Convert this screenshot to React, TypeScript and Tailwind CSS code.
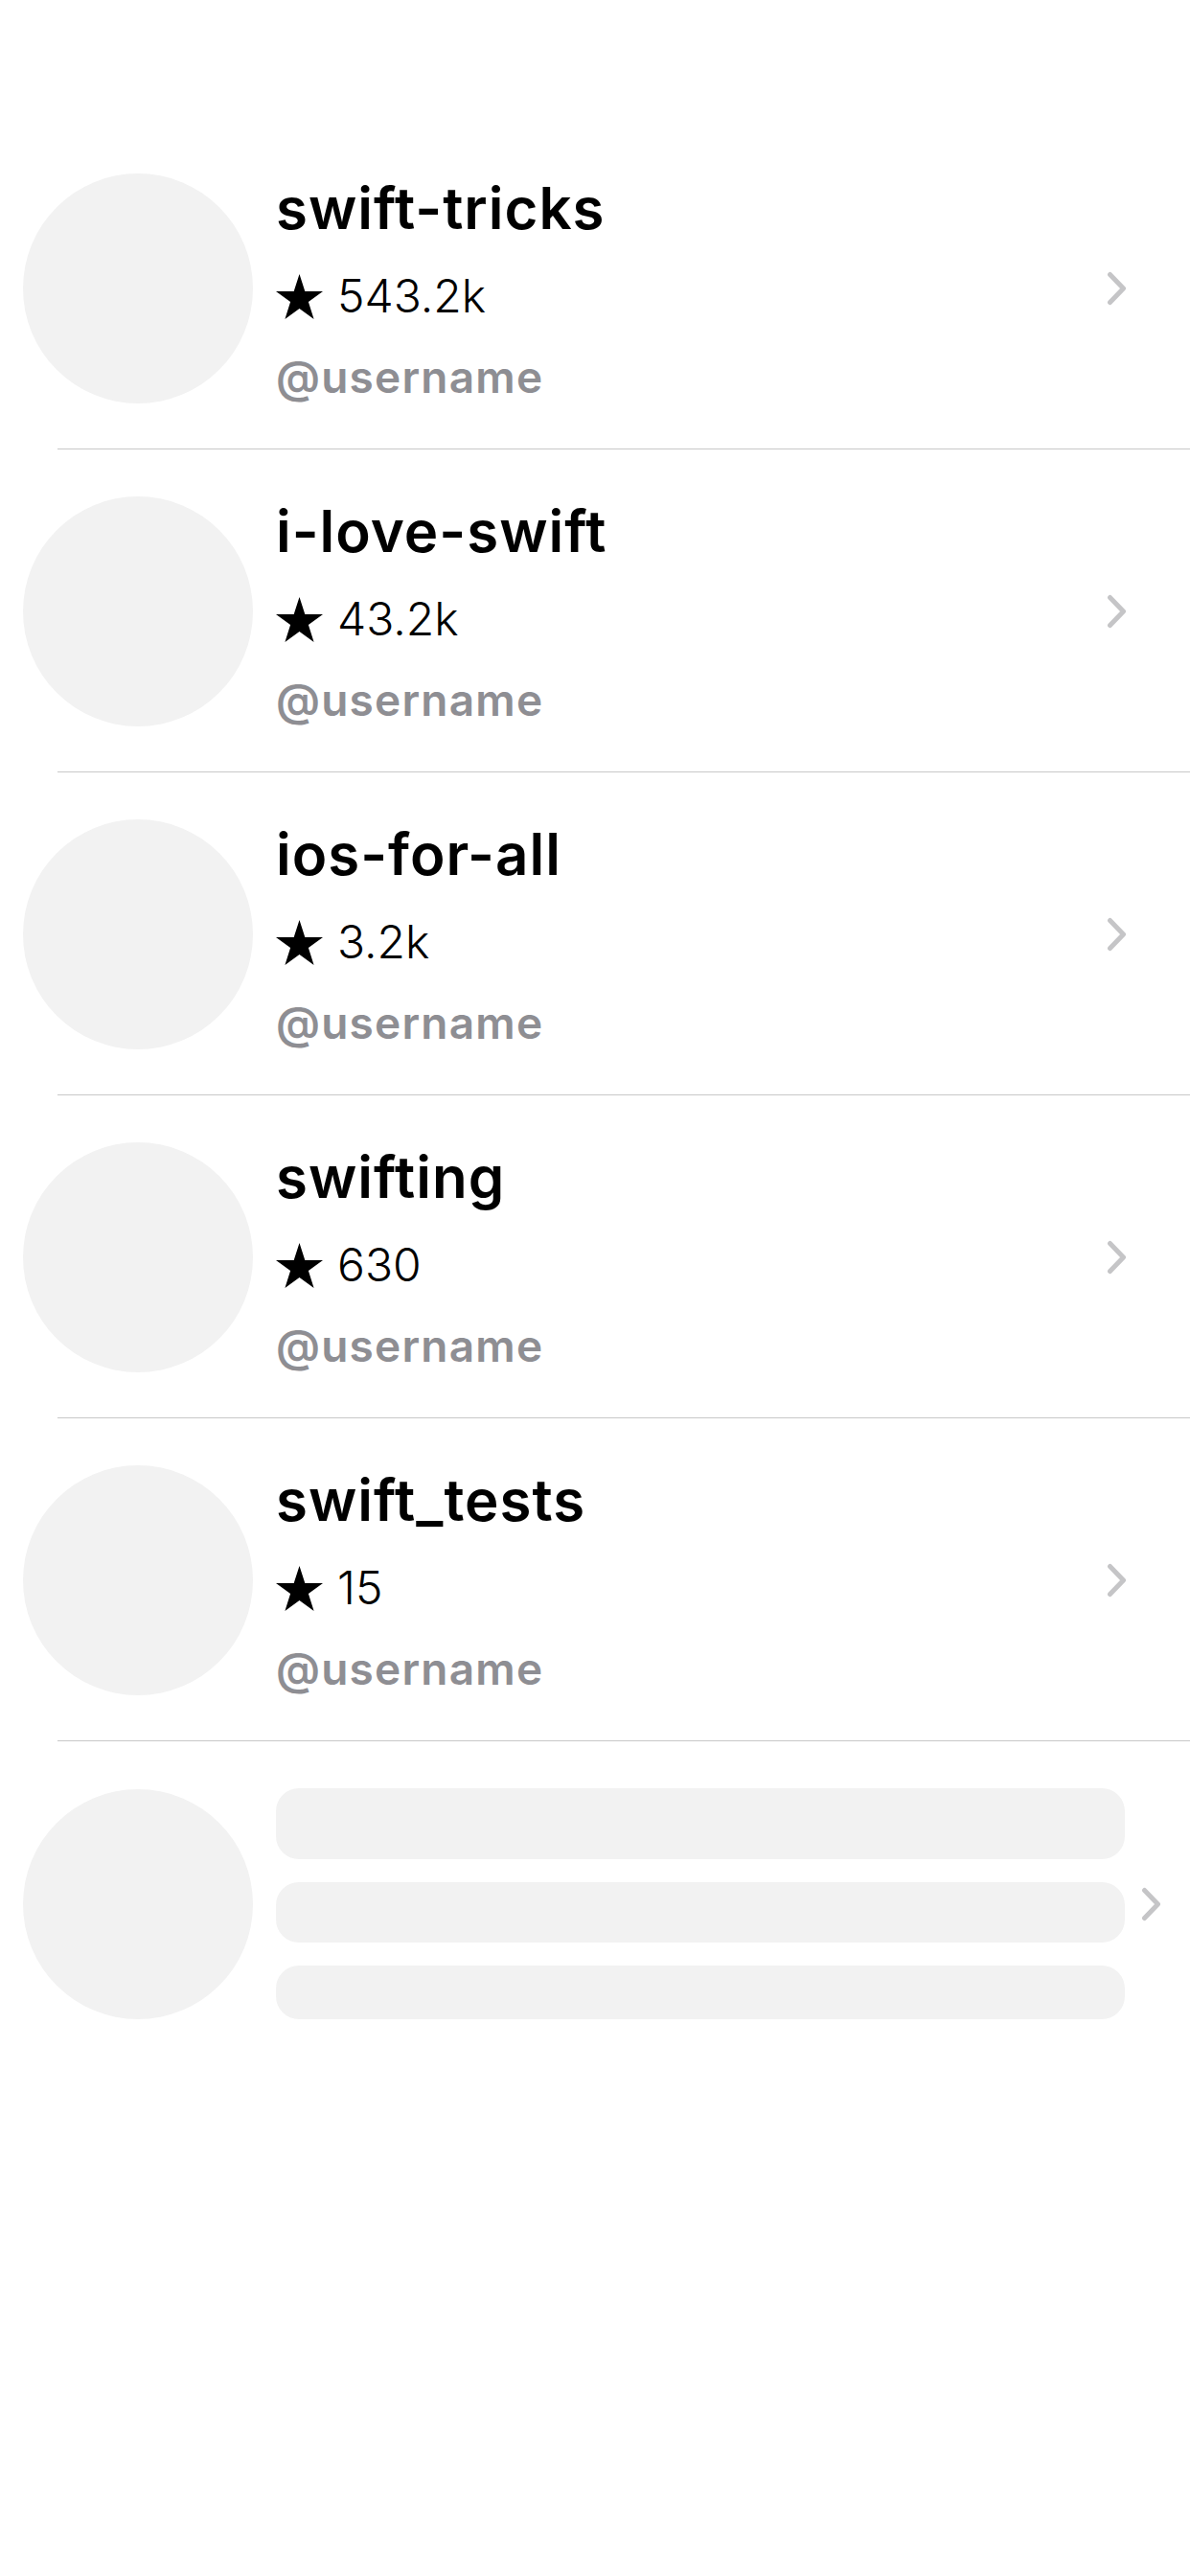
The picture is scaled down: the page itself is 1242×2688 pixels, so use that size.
import React from 'react';

type Repo = { name: string; stars: string; user: string };

const repos: Repo[] = [
  { name: 'swift-tricks', stars: '543.2k', user: '@username' },
  { name: 'i-love-swift', stars: '43.2k', user: '@username' },
  { name: 'ios-for-all', stars: '3.2k', user: '@username' },
  { name: 'swifting', stars: '630', user: '@username' },
  { name: 'swift_tests', stars: '15', user: '@username' },
];

const Chevron = () => (
  <svg width="21" height="36" viewBox="0 0 21 36" fill="none" className="shrink-0">
    <path d="M3.5 3.5 L17.5 18 L3.5 32.5" stroke="#c5c5c7" strokeWidth="5" strokeLinecap="round" strokeLinejoin="round" />
  </svg>
);

const Star = () => (
  <svg width="49" height="47" viewBox="0 0 49 47" className="shrink-0">
    <polygon
      points="24.5,0 30.3,17.9 49,17.9 33.9,29 39.6,47 24.5,35.9 9.4,47 15.1,29 0,17.9 18.7,17.9"
      fill="#000"
    />
  </svg>
);

const RepoRow = ({ repo }: { repo: Repo }) => (
  <div>
    <div className="flex items-center pl-[24px] pt-[49px] pb-[47px]">
      <div className="w-[240px] h-[240px] rounded-full bg-[#f2f2f2] shrink-0" />
      <div className="flex-1 self-start ml-[24px] flex flex-col">
        <div className="h-[72px] leading-[72px] text-[60px] font-semibold text-black tracking-[1px]">
          {repo.name}
        </div>
        <div className="mt-[28px] h-[56px] flex items-center gap-[15px]">
          <Star />
          <span className="text-[48px] leading-[56px] font-light text-black">{repo.stars}</span>
        </div>
        <div className="mt-[30px] h-[52px] leading-[52px] text-[46px] font-semibold text-[#8e8e93] tracking-[1.2px]">
          {repo.user}
        </div>
      </div>
      <div className="mr-[66px]">
        <Chevron />
      </div>
    </div>
    <div className="ml-[60px] h-px bg-[#c8c8c8]" />
  </div>
);

const SkeletonRow = () => (
  <div className="flex items-center pl-[24px] pt-[49px] pb-[47px]">
    <div className="w-[240px] h-[240px] rounded-full bg-[#f2f2f2] shrink-0" />
    <div className="ml-[24px] w-[886px] flex flex-col gap-[24px]">
      <div className="h-[74px] rounded-[24px] bg-[#f2f2f2]" />
      <div className="h-[63px] rounded-[24px] bg-[#f2f2f2]" />
      <div className="h-[56px] rounded-[24px] bg-[#f2f2f2]" />
    </div>
    <div className="ml-[17px]">
      <Chevron />
    </div>
  </div>
);

export default function App() {
  return (
    <div
      className="min-h-screen w-[1242px] bg-white pt-[132px]"
      style={{ fontFamily: 'Inter, "Noto Sans", sans-serif' }}
    >
      {repos.map((r) => (
        <RepoRow key={r.name} repo={r} />
      ))}
      <SkeletonRow />
    </div>
  );
}
